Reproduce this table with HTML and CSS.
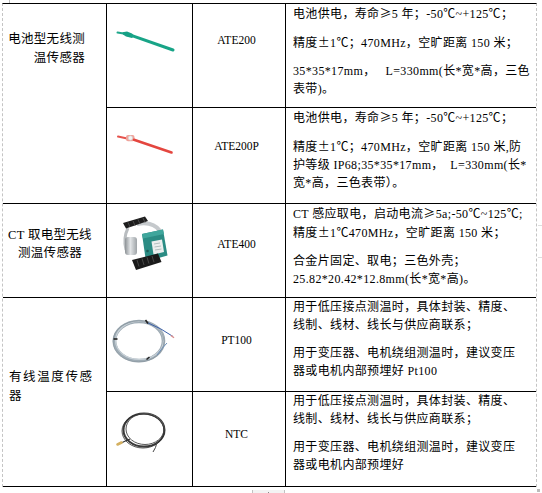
FILE: index.html
```html
<!DOCTYPE html>
<html lang="zh-CN">
<head>
<meta charset="utf-8">
<title>温度传感器</title>
<link rel="stylesheet" href="styles.css">
</head>
<body>
<div class="sheet">
  <div class="grid">
    <div class="cell cat cat-a">电池型无线测<br>温传感器</div>
    <div class="cell pic">
      <svg width="85" height="103" viewBox="0 0 85 103">
        <path d="M10.5 28.6 L16.5 29.6" stroke="#1fa78b" stroke-width="2" stroke-linecap="round" fill="none"/>
        <path d="M15.5 28.2 L20 27.6 L25 29.4 L27.2 32 L25 33.9 L19 32.6 L16 30.6 Z" fill="#16a085"/>
        <path d="M25 31.6 L66 46" stroke="#18a487" stroke-width="3" stroke-linecap="round" fill="none"/>
      </svg>
    </div>
    <div class="cell model m1">ATE200</div>
    <div class="cell desc">
      <p>电池供电，寿命<span class="fw">≥</span>5 年；-50℃~+125℃；</p>
      <p>精度<span class="fw">±</span>1℃；470MHz，空旷距离 150 米；</p>
      <p>35*35*17mm，&nbsp;&nbsp;&nbsp;L=330mm(长*宽*高，三色<br>表带)。</p>
    </div>
    <div class="cell pic">
      <svg width="85" height="95" viewBox="0 0 85 95">
        <path d="M11 28.6 L19 30.2" stroke="#e6524c" stroke-width="2" stroke-linecap="round" fill="none"/>
        <rect x="19" y="27" width="8.5" height="6.2" rx="2" fill="#f0a39a"/>
        <circle cx="23.4" cy="30" r="2.2" fill="#f4f4f4" stroke="#cfcfcf" stroke-width="0.6"/>
        <path d="M27 31.8 L64.5 44.5" stroke="#e4463f" stroke-width="2.6" stroke-linecap="round" fill="none"/>
      </svg>
    </div>
    <div class="cell model m2">ATE200P</div>
    <div class="cell desc">
      <p>电池供电，寿命<span class="fw">≥</span>5 年；-50℃~+125℃；</p>
      <p>精度<span class="fw">±</span>1℃；470MHz，空旷距离 150 米,防<br>护等级 IP68;35*35*17mm，&nbsp;&nbsp;L=330mm(长*<br>宽*高，三色表带）。</p>
    </div>

    <div class="cell cat cat-b">CT 取电型无线<br>测温传感器</div>
    <div class="cell pic">
      <svg width="85" height="93" viewBox="0 0 85 93">
        <defs>
          <linearGradient id="metal" x1="0" y1="0" x2="1" y2="0">
            <stop offset="0" stop-color="#8d9296"/>
            <stop offset="0.45" stop-color="#e2e5e7"/>
            <stop offset="1" stop-color="#9ea3a7"/>
          </linearGradient>
        </defs>
        <path d="M30 20 Q46 17 53 27" stroke="#c5c9cc" stroke-width="4" fill="none"/>
        <path d="M21 24 Q16 34 19 46" stroke="#b9bdc0" stroke-width="3" fill="none"/>
        <rect x="18" y="33" width="12" height="18" rx="3" fill="url(#metal)"/>
        <path d="M16 19 L38 12.5 L41 17 L19 24.5 Z" fill="#1d1d1d"/>
        <path d="M21 18.5 L23 23 M26 17 L28 21.6 M31 15.5 L33 20 M36 14 L38 18.5" stroke="#4a4a4a" stroke-width="1"/>
        <path d="M35 30 L56 25.5 L60.5 51.5 L39 57.5 Z" fill="#2b8c84"/>
        <path d="M35 30 L56 25.5 L57 30 L36 34.5 Z" fill="#3fa69c"/>
        <path d="M44.5 37.5 L55 35.5 L57 48 L46.5 50.5 Z" fill="#eceeee"/>
        <path d="M47 40 L53 39 M47.5 43 L54 42 M48 46 L54.5 45" stroke="#9aa" stroke-width="0.7"/>
        <circle cx="40.5" cy="47" r="1.3" fill="#1c5e58"/>
        <path d="M25 56 L51 49.5 L54.5 58 L29 66 Z" fill="#1a1a1a"/>
        <path d="M30 56 L32 62.5 M35 54.5 L37 61 M40 53.3 L42 59.6 M45 52 L47 58.3" stroke="#474747" stroke-width="1"/>
      </svg>
    </div>
    <div class="cell model m3">ATE400</div>
    <div class="cell desc">
      <p>CT 感应取电，启动电流<span class="fw">≥</span>5a;-50℃~125℃;<br>精度<span class="fw">±</span>1℃470MHz，空旷距离 150 米；</p>
      <p>合金片固定、取电；三色外壳；<br>25.82*20.42*12.8mm(长*宽*高)。</p>
    </div>

    <div class="cell cat cat-c">有线温度传感<br>器</div>
    <div class="cell pic">
      <svg width="85" height="93" viewBox="0 0 85 93">
        <ellipse cx="32" cy="43" rx="24.5" ry="19.5" fill="none" stroke="#9eabb4" stroke-width="3.6"/>
        <ellipse cx="32.5" cy="42.5" rx="24" ry="19" fill="none" stroke="#c8d1d7" stroke-width="1.2"/>
        <ellipse cx="31.5" cy="43.5" rx="25.5" ry="20.5" fill="none" stroke="#86939c" stroke-width="0.7"/>
        <path d="M40 24.5 Q54 30 66 38.5" stroke="#3a5fa8" stroke-width="1" fill="none"/>
        <path d="M64 37.5 L67 39.8" stroke="#d98c8c" stroke-width="1.4"/>
        <path d="M50 57 Q55 50 60 45" stroke="#6d8fb8" stroke-width="1" fill="none"/>
        <path d="M38.5 22 L41 25.5" stroke="#222" stroke-width="1.6"/>
        <path d="M6.5 41 L10.5 41" stroke="#222" stroke-width="1.6"/>
        <path d="M39.5 61.5 L42.5 59" stroke="#222" stroke-width="1.6"/>
      </svg>
    </div>
    <div class="cell model m4">PT100</div>
    <div class="cell desc">
      <p>用于低压接点测温时，具体封装、精度、<br>线制、线材、线长与供应商联系；</p>
      <p>用于变压器、电机绕组测温时，建议变压<br>器或电机内部预埋好 Pt100</p>
    </div>
    <div class="cell pic">
      <svg width="85" height="94" viewBox="0 0 85 94">
        <ellipse cx="37" cy="38" rx="20.5" ry="16.5" fill="none" stroke="#3a3a3a" stroke-width="2"/>
        <ellipse cx="38" cy="37" rx="19" ry="15.5" fill="none" stroke="#5a5a5a" stroke-width="1"/>
        <ellipse cx="36" cy="39" rx="21" ry="17" fill="none" stroke="#2a2a2a" stroke-width="0.8"/>
        <path d="M23 47 Q18 49 13.5 51.5" stroke="#333" stroke-width="1.2" fill="none"/>
        <path d="M10.5 52.5 L14.5 50.5" stroke="#d4b060" stroke-width="2.6" stroke-linecap="round"/>
        <path d="M50 50 Q49 56 46 60" stroke="#444" stroke-width="1" fill="none"/>
      </svg>
    </div>
    <div class="cell model m5">NTC</div>
    <div class="cell desc">
      <p>用于低压接点测温时，具体封装、精度、<br>线制、线材、线长与供应商联系；</p>
      <p>用于变压器、电机绕组测温时，建议变压<br>器或电机内部预埋好</p>
    </div>
  </div>
  <div class="endmark"><span class="dot"></span></div>
  <div class="rowmark"></div>
</div>
</body>
</html>
```

FILE: styles.css
```css
html, body {
  margin: 0;
  padding: 0;
  background: #ffffff;
}

body {
  font-family: "Liberation Serif", "Noto Sans CJK SC", serif;
  font-size: 12px;
  color: #000;
}

.sheet {
  position: relative;
  width: 542px;
  height: 493px;
  padding-top: 3px;
  box-sizing: border-box;
}

.sheet::before {
  content: "";
  position: absolute;
  left: 9px;
  top: 0;
  width: 1px;
  height: 3px;
  background: #bdbdbd;
}

.sheet::after {
  content: "";
  position: absolute;
  left: 537px;
  top: 489px;
  width: 3px;
  height: 3px;
  background: #bcbcbc;
}

.grid {
  margin-left: 2px;
  width: 535px;
  box-sizing: border-box;
  display: grid;
  grid-template-columns: 104px 86px 93px 250px;
  grid-template-rows: 104px 96px 94px 94px 95px;
  border-top: 1px solid #000;
  border-left: 1px dashed #c4c4c4;
  border-right: 1px dashed #c4c4c4;
}

.cell {
  box-sizing: border-box;
  border-bottom: 1px solid #000;
  border-right: 1px solid #000;
  overflow: hidden;
}

.cell.desc {
  border-right: none;
  padding: 0 0 0 7px;
  line-height: 18px;
  letter-spacing: 0.35px;
  white-space: nowrap;
}

.desc p {
  margin: 0 0 10px 0;
}

.fw {
  font-family: "Noto Sans CJK SC", sans-serif;
}

.cat {
  font-size: 12.5px;
  letter-spacing: 0.3px;
}

.cat-a {
  grid-row: span 2;
  text-align: right;
  padding: 26px 21px 0 0;
  line-height: 19px;
}

.cat-b {
  text-align: center;
  padding: 22px 9px 0 0;
  line-height: 18px;
}

.cat-c {
  grid-row: span 2;
  text-align: left;
  padding: 70px 0 0 6px;
  line-height: 19px;
  letter-spacing: 1.6px;
}

.pic svg {
  display: block;
}

.model {
  text-align: center;
  font-size: 11.5px;
  line-height: 18px;
  padding-right: 5px;
}

.m1 { padding-top: 27px; }
.m2 { padding-top: 29px; }
.m3 { padding-top: 31px; }
.m4 { padding-top: 33px; }
.m5 { padding-top: 33px; }

.endmark {
  position: relative;
  margin: 3px 0 0 252px;
  width: 33px;
  height: 4px;
  box-sizing: border-box;
  border-left: 1px solid #c2c2c2;
  border-right: 1px solid #c2c2c2;
  background: #f3f3f3;
}

.endmark .dot {
  position: absolute;
  left: 15px;
  top: 2px;
  width: 1px;
  height: 1px;
  background: #888;
}

.rowmark {
  position: absolute;
  left: 538px;
  top: 225px;
  width: 4px;
  height: 33px;
  box-sizing: border-box;
  border-top: 1px solid #dedede;
  border-bottom: 1px solid #dedede;
}
```
